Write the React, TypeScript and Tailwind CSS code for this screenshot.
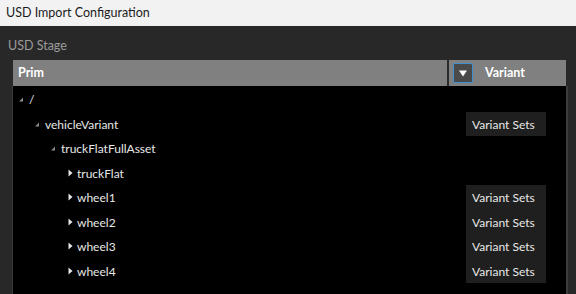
import React from "react";

type Prim = {
  name: string;
  level: number;
  expanded: boolean;
  variant?: boolean;
};

const prims: Prim[] = [
  { name: "/", level: 0, expanded: true },
  { name: "vehicleVariant", level: 1, expanded: true, variant: true },
  { name: "truckFlatFullAsset", level: 2, expanded: true },
  { name: "truckFlat", level: 3, expanded: false },
  { name: "wheel1", level: 3, expanded: false, variant: true },
  { name: "wheel2", level: 3, expanded: false, variant: true },
  { name: "wheel3", level: 3, expanded: false, variant: true },
  { name: "wheel4", level: 3, expanded: false, variant: true },
];

function Expander({ expanded }: { expanded: boolean }) {
  if (expanded) {
    return (
      <svg width="13" height="10" viewBox="0 0 13 10" className="shrink-0">
        <polygon points="3,7.5 7,7.5 7,3.5" fill="#8a8a8a" />
      </svg>
    );
  }
  return (
    <svg width="13" height="10" viewBox="0 0 13 10" className="shrink-0">
      <polygon points="4.5,1.5 8.5,5 4.5,8.5" fill="#e6e6e6" />
    </svg>
  );
}

export default function App() {
  return (
    <div
      className="w-[576px] h-[294px] overflow-hidden bg-[#282828] flex flex-col"
      style={{ fontFamily: 'Lato, "Noto Sans", sans-serif' }}
    >
      <div className="h-[26px] shrink-0 bg-[#f2f2f2] px-[6px] flex items-center text-[12.5px] text-[#1b1b1b]">
        USD Import Configuration
      </div>

      <div className="h-[34px] shrink-0 flex items-center pl-[8px] pt-[6px] text-[12.5px] text-[#9c9c9c]">
        USD Stage
      </div>

      <div className="flex-1 flex flex-col ml-[12px] mr-[8px]">
        <div className="h-[26px] shrink-0 ml-[1px] mr-[2px] bg-[#808080] flex text-[12.5px] font-bold text-white">
          <div className="w-[434px] flex items-center pl-[5px]">Prim</div>
          <div className="w-[2px] bg-[#2b2b2b]" />
          <div className="flex-1 flex items-center pl-[4px]">
            <div className="w-[20px] h-[20px] bg-[#4a4a4a] border border-[#3d8fd1] rounded-[2px] flex items-center justify-center">
              <svg width="8" height="7" viewBox="0 0 8 7">
                <polygon points="0,0.5 8,0.5 4,6.5" fill="#ffffff" />
              </svg>
            </div>
            <span className="ml-[12px]">Variant</span>
          </div>
        </div>

        <div className="flex-1 bg-black border-l border-l-[#3a3a3a] border-r-2 border-r-[#3c3c3c] pt-[1px] text-[12px] text-[#e8e8e8]">
          {prims.map((p) => (
            <div key={p.name} className="h-[24.5px] flex items-center">
              <div
                className="flex-1 flex items-center"
                style={{ paddingLeft: 3 + p.level * 16 }}
              >
                <Expander expanded={p.expanded} />
                <span className="translate-y-[1px]">{p.name}</span>
              </div>
              {p.variant && (
                <div className="w-[80px] h-full mr-[20px] bg-[#1f1f1f] flex items-center pl-[6px]">
                  <span className="translate-y-[1px]">Variant Sets</span>
                </div>
              )}
            </div>
          ))}
        </div>
      </div>
    </div>
  );
}
